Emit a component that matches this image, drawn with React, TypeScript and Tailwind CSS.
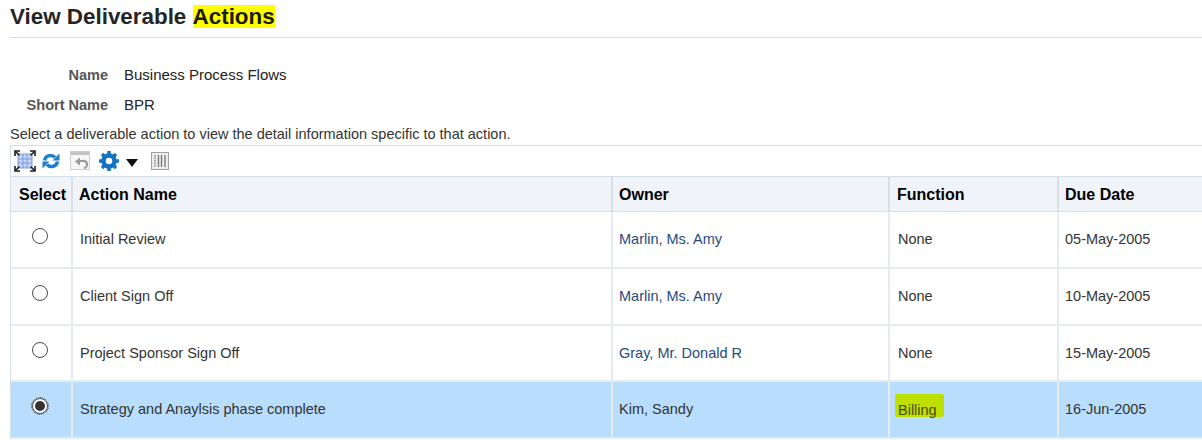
const rows = [
  { action: "Initial Review", owner: "Marlin, Ms. Amy", fn: "None", due: "05-May-2005", h: "h-[57px]" },
  { action: "Client Sign Off", owner: "Marlin, Ms. Amy", fn: "None", due: "10-May-2005", h: "h-[57px]" },
  { action: "Project Sponsor Sign Off", owner: "Gray, Mr. Donald R", fn: "None", due: "15-May-2005", h: "h-[56px]" },
  { action: "Strategy and Anaylsis phase complete", owner: "Kim, Sandy", fn: "Billing", due: "16-Jun-2005", h: "h-[57px]", selected: true },
];

const cols = "grid grid-cols-[62px_540px_277px_169px_1fr]";

function ToolbarIcons() {
  return (
    <div className="flex items-center h-[30px] pl-[3px]">
      {/* detach */}
      <svg width="22" height="22" viewBox="0 0 22 22" className="mr-[6px]">
        <rect x="4" y="4" width="14" height="14" fill="#c3d3f2" stroke="#7f9bd6" />
        <path d="M4 9h14M4 13h14M9 4v14M13 4v14" stroke="#7f9bd6" strokeWidth="1" />
        <path d="M1 6V1h5M16 1h5v5M21 16v5h-5M6 21H1v-5" fill="none" stroke="#1c1c1c" strokeWidth="1.6" />
        <path d="M1.5 1.5l4 4M20.5 1.5l-4 4M20.5 20.5l-4-4M1.5 20.5l4-4" stroke="#1c1c1c" strokeWidth="1.6" />
      </svg>
      {/* refresh */}
      <svg width="18" height="18" viewBox="0 0 18 18" className="mr-[10px]">
        <path d="M2.5 8.5C3 5 6 3.5 8.5 3.5c2 0 3.5 .7 4.5 2" fill="none" stroke="#1a7fd0" strokeWidth="3.6" />
        <path d="M17.5 1.5v7h-7z" fill="#1a7fd0" />
        <path d="M15.5 9.5C15 13 12 14.5 9.5 14.5c-2 0-3.5-.7-4.5-2" fill="none" stroke="#1a7fd0" strokeWidth="3.6" />
        <path d="M.5 16.5v-7h7z" fill="#1a7fd0" />
      </svg>
      {/* revert, disabled */}
      <svg width="20" height="20" viewBox="0 0 20 20" className="mr-[8px]">
        <rect x="0.5" y="0.5" width="19" height="18" fill="#f6f6f6" stroke="#cdcdcd" />
        <rect x="1" y="1" width="18" height="3" fill="#c4c4c4" />
        <path d="M9 10h4a3.5 3.5 0 0 1 1 7" fill="none" stroke="#9a9a9a" strokeWidth="2.2" />
        <path d="M5 10.5l5-4v8z" fill="#9a9a9a" />
      </svg>
      {/* gear */}
      <svg width="22" height="22" viewBox="0 0 22 22" className="mr-[6px]">
        <circle cx="11" cy="11" r="5.5" fill="none" stroke="#1573c4" strokeWidth="4.5" />
        <path
          d="M11 1v4M11 17v4M1 11h4M17 11h4M4 4l3 3M15 15l3 3M18 4l-3 3M7 15l-3 3"
          stroke="#1573c4"
          strokeWidth="3.5"
        />
      </svg>
      <svg width="12" height="8" viewBox="0 0 12 8" className="mr-[13px] mt-[3px]">
        <path d="M0 0h12L6 8z" fill="#111" />
      </svg>
      {/* columns, disabled */}
      <svg width="18" height="18" viewBox="0 0 18 18">
        <rect x="0.5" y="0.5" width="17" height="17" fill="#ececec" stroke="#a0a0a0" />
        <path d="M4 3v12" stroke="#8a8a8a" strokeWidth="1.5" strokeDasharray="1.5 1" />
        <path d="M7.5 3v12M10.5 3v12M14 3v12" stroke="#777" strokeWidth="1.3" />
      </svg>
    </div>
  );
}

function Radio({ checked }: { checked?: boolean }) {
  return (
    <span
      className={`w-[16px] h-[16px] rounded-full border border-[#4a4a4a] bg-white flex items-center justify-center -mt-[7px] -ml-[3px] ${
        checked ? "outline-1 outline-dotted outline-[#444]" : ""
      }`}
    >
      {checked && <span className="w-[10px] h-[10px] rounded-full bg-[#333]" />}
    </span>
  );
}

export default function App() {
  return (
    <div
      className="w-[1202px] h-[440px] overflow-hidden bg-white pl-[10px] text-[14.5px] text-[#333]"
      style={{ fontFamily: '"Liberation Sans", Arial, sans-serif' }}
    >
      <h1 className="h-[38px] pt-[2px] border-b border-[#d6dfe6] text-[22.4px] leading-[29px] font-bold text-[#252525]">
        View Deliverable <span className="inline-block h-[23px] leading-[23px] bg-[#ffff00] text-[#1a1a00]">Actions</span>
      </h1>

      <div className="mt-[27px] grid grid-cols-[98px_1fr] gap-x-[16px] gap-y-[10px] leading-[20px] text-[15px]">
        <div className="text-right font-bold text-[14.5px] text-[#555]">Name</div>
        <div className="text-[#222]">Business Process Flows</div>
        <div className="text-right font-bold text-[14.5px] text-[#555]">Short Name</div>
        <div className="text-[#222]">BPR</div>
      </div>

      <p className="mt-[12px] h-[15px] leading-[15px] text-[#333]">
        Select a deliverable action to view the detail information specific to that action.
      </p>

      <div className="mt-[3px] border-t border-l border-[#d6dfe6]">
        <ToolbarIcons />

        <div className={`${cols} h-[36px] bg-[#f0f3f7] border-y border-[#d6dfe6] font-bold text-[16px] text-black items-center`}>
          <div className="h-full flex items-center pl-[8px] pt-[1px] border-r-2 border-[#d6dfe6]">Select</div>
          <div className="h-full flex items-center pl-[6px] pt-[1px] border-r-2 border-[#d6dfe6]">Action Name</div>
          <div className="h-full flex items-center pl-[6px] pt-[1px] border-r-2 border-[#d6dfe6]">Owner</div>
          <div className="h-full flex items-center pl-[7px] pt-[1px] border-r-2 border-[#d6dfe6]">Function</div>
          <div className="h-full flex items-center pl-[6px] pt-[1px]">Due Date</div>
        </div>

        {rows.map((row) => (
          <div
            key={row.action}
            className={`${cols} ${row.h} border-b-2 border-[#e6ebf0] ${row.selected ? "bg-[#b8ddfd]" : "bg-white"}`}
          >
            <div className="flex items-center justify-center border-r-2 border-[#e6ebf0]">
              <Radio checked={row.selected} />
            </div>
            <div className="flex items-center pl-[7px] pt-[1px] border-r-2 border-[#e6ebf0]">{row.action}</div>
            <div className={`flex items-center pl-[6px] pt-[1px] border-r-2 border-[#e6ebf0] ${row.selected ? "" : "text-[#1f4a7d]"}`}>{row.owner}</div>
            <div className="flex items-center pl-[8px] pt-[1px] border-r-2 border-[#e6ebf0]">
              {row.fn === "Billing" ? (
                <span className="inline-block h-[23px] leading-[32px] -mt-[10px] rounded-[2px] bg-[#bde000] text-[#4a4a00] pl-[3px] -ml-[3px] pr-[7px]">{row.fn}</span>
              ) : (
                row.fn
              )}
            </div>
            <div className="flex items-center pl-[6px] pt-[1px]">{row.due}</div>
          </div>
        ))}
      </div>
    </div>
  );
}
